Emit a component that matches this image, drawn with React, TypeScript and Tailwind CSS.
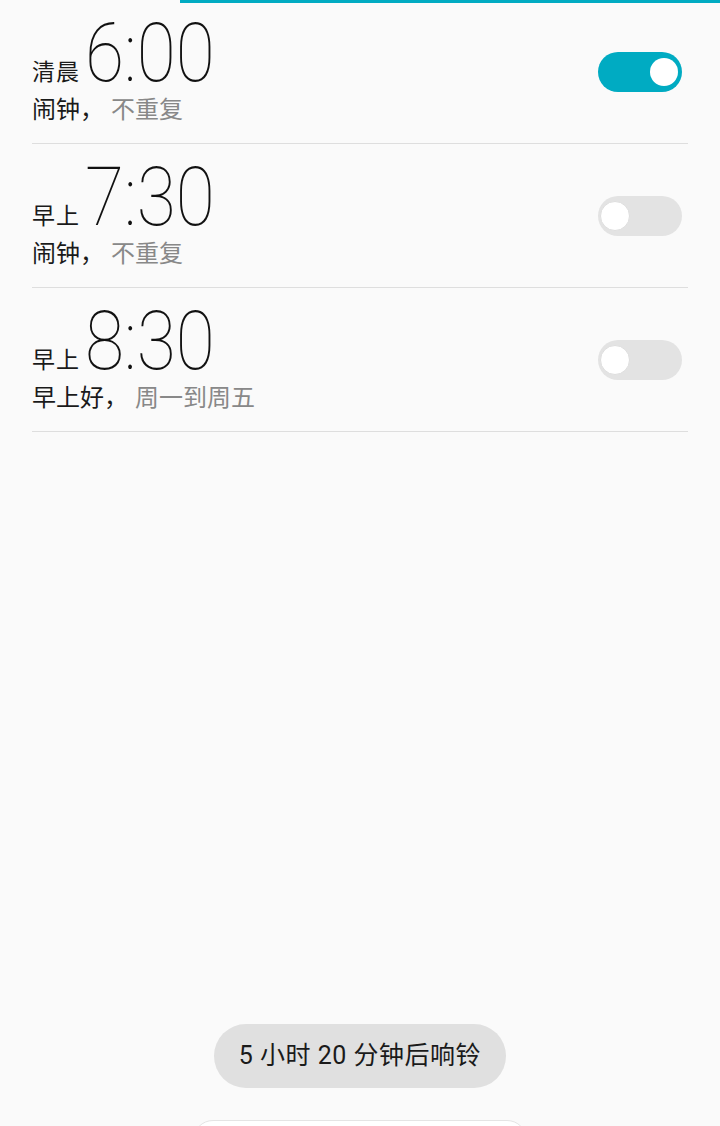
import React from "react";

type Alarm = {
  period: string;
  time: string;
  label: string;
  repeat: string;
  on: boolean;
};

const alarms: Alarm[] = [
  { period: "清晨", time: "6:00", label: "闹钟", repeat: "不重复", on: true },
  { period: "早上", time: "7:30", label: "闹钟", repeat: "不重复", on: false },
  { period: "早上", time: "8:30", label: "早上好", repeat: "周一到周五", on: false },
];

const cjk = "font-['Roboto','Noto_Sans_CJK_SC',sans-serif]";

const Toggle = ({ on }: { on: boolean }) => (
  <div
    className={
      on
        ? "mr-[6px] w-[84px] h-[40px] rounded-full bg-[#00abc2] flex items-center justify-end pr-[4px]"
        : "mr-[6px] w-[84px] h-[40px] rounded-full bg-[#e3e3e3] flex items-center justify-start pl-[2px]"
    }
  >
    <div
      className={
        on
          ? "w-[28px] h-[28px] rounded-full bg-white"
          : "w-[30px] h-[30px] rounded-full bg-white border border-[#dedede]"
      }
    />
  </div>
);

const AlarmRow = ({ alarm }: { alarm: Alarm }) => (
  <div className="h-[144px] border-b border-[#dedede] flex items-center justify-between">
    <div className="flex flex-col">
      <div className="flex items-baseline h-[70px] mt-[2px]">
        <span className={`${cjk} text-[23px] leading-none text-[#1a1a1a] -translate-y-[1px] tracking-[1px]`}>{alarm.period}</span>
        <span className="font-['Roboto',sans-serif] font-thin text-[81px] leading-[70px] text-[#111] inline-block origin-left scale-x-[0.88] ml-[5px]">
          {alarm.time}
        </span>
      </div>
      <div className={`${cjk} text-[24px] leading-[32px] mt-[5px] flex`}>
        <span className="text-[#1a1a1a]">{alarm.label}，</span>
        <span className="text-[#888888] ml-[7px]">{alarm.repeat}</span>
      </div>
    </div>
    <Toggle on={alarm.on} />
  </div>
);

export default function App() {
  return (
    <div className="relative w-[720px] h-[1126px] bg-[#fafafa] overflow-hidden flex flex-col">
      <div className="h-[3px] flex">
        <div className="w-[180px]" />
        <div className="flex-1 bg-[#00abc2]" />
      </div>
      <div className="px-8 -mt-[3px]">
        {alarms.map((a) => (
          <AlarmRow key={a.time} alarm={a} />
        ))}
      </div>
      <div className="flex-1" />
      <div className="flex justify-center">
        <div className={`${cjk} h-[64px] px-[25px] rounded-full bg-[#e0e0e0] flex items-center text-[25px] text-[#1a1a1a] tracking-[0.5px]`}>
          5 小时 20 分钟后响铃
        </div>
      </div>
      <div className="flex justify-center mt-[32px]">
        <div className="w-[334px] h-[40px] -mb-[34px] rounded-[32px] border border-[#e4e4e4] bg-white" />
      </div>
    </div>
  );
}
